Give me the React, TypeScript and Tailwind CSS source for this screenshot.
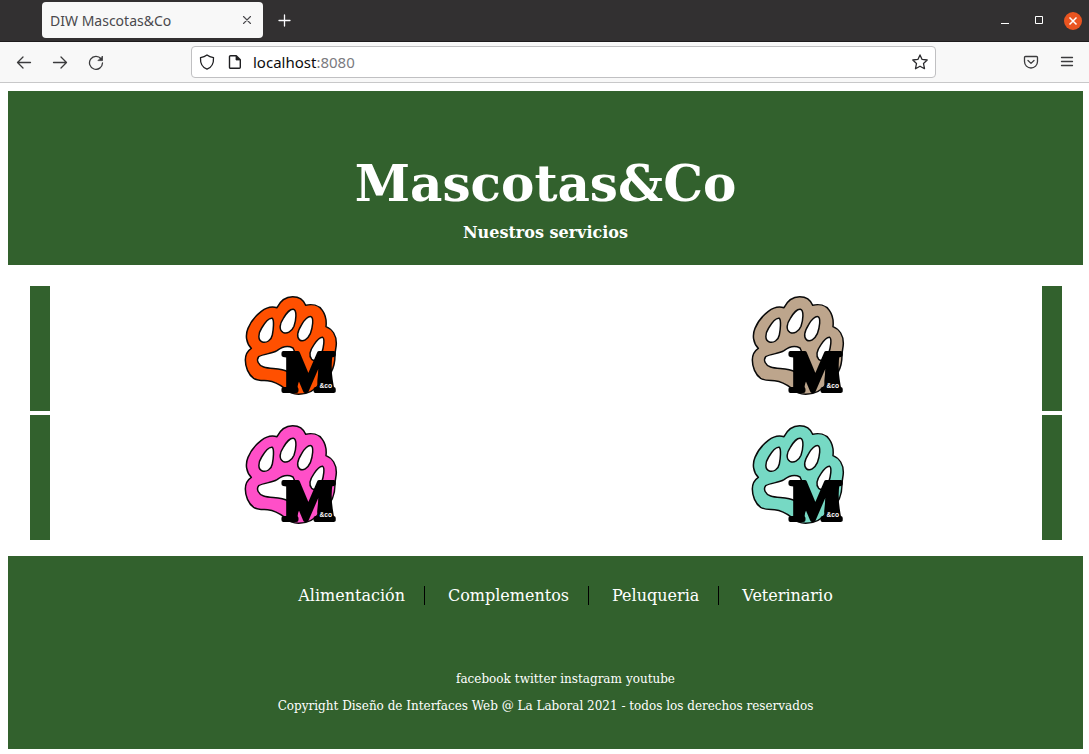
import type { ReactNode } from "react";

const services = [
  { name: "Alimentación", color: "#ff5000" },
  { name: "Complementos", color: "#bda58c" },
  { name: "Peluqueria", color: "#ff4fc8" },
  { name: "Veterinario", color: "#76d9c4" },
];

const networks = ["facebook", "twitter", "instagram", "youtube"];

function PawLogo({ color, label }: { color: string; label: string }) {
  return (
    <svg viewBox="6 0 330 360" className="h-[120px] w-[110px]" role="img" aria-label={label}>
      <g stroke="#0a0a0a" strokeWidth="4.5" strokeLinejoin="round">
        <path
          fill={color}
          d="M123 65C133 44 148 32 170 32C189 32 203 42 209 58C228 53 248 58 259 73C269 87 272 104 270 122C290 130 301 150 301 172C301 184 297 194 297 208C297 250 277 278 251 293C239 310 217 325 188 325C168 325 157 318 146 307C127 292 115 286 95 284C79 283 66 285 53 277C37 266 28 243 28 222C28 207 34 195 46 187C31 173 27 148 36 127C45 105 59 89 76 76C90 65 107 60 123 65Z"
        />
        <g fill="#fff">
          <path d="M109 97C115 102 112 132 109 147C106 163 91 172 79 168C65 163 66 143 77 126C86 111 100 95 109 97Z" />
          <path d="M172 70C184 73 180 103 174 121C167 138 152 145 141 139C128 131 131 113 142 97C150 83 163 69 172 70Z" />
          <path d="M225 92C234 95 230 125 223 143C215 161 201 168 191 162C180 152 187 132 197 116C205 101 217 90 225 92Z" />
          <path d="M260 154C267 158 263 184 257 202C250 221 238 228 227 220C216 207 224 190 234 176C242 164 252 153 260 154Z" />
          <path d="M68 212C83 203 107 204 123 194C136 184 153 177 171 186L194 237L218 290C190 290 173 270 157 258C133 245 104 250 83 243C67 238 60 222 68 212Z" />
        </g>
      </g>
      <path
        fill="#000"
        d="M152 204H184L190 284Q182 300 186 316H146Q158 300 156 280ZM252 204H290Q284 240 290 280Q292 300 298 318H248Q242 300 244 284Z"
      />
      <text
        x="219"
        y="315"
        textAnchor="middle"
        className="font-['Liberation_Serif',serif] text-[168px] font-bold"
        fill="#000"
        stroke="#000"
        strokeWidth="12"
        strokeLinejoin="round"
      >
        M
      </text>
      <text
        x="269"
        y="306"
        textAnchor="middle"
        className="font-['Liberation_Sans',sans-serif] text-[20px] font-bold"
        fill="#fff"
      >
        &amp;co
      </text>
    </svg>
  );
}

function ToolButton({ label, children }: { label: string; children: ReactNode }) {
  return (
    <button type="button" aria-label={label} className="flex size-8 items-center justify-center">
      <svg
        viewBox="0 0 16 16"
        className="size-4"
        fill="none"
        stroke="#3b3b3d"
        strokeWidth="1.3"
        strokeLinecap="round"
        strokeLinejoin="round"
      >
        {children}
      </svg>
    </button>
  );
}

function TabStrip() {
  return (
    <div className="flex h-[42px] items-center border-b border-[#1d1b1c] bg-[#323031] pr-[7px] pl-[42px]">
      <div className="mb-px flex h-9 w-[221px] items-center justify-between rounded-[4px] bg-[#f8f8f8] pr-2 pl-2">
        <span className="text-[14px] text-[#4a494d]">DIW Mascotas&amp;Co</span>
        <button type="button" aria-label="Cerrar pestaña" className="flex size-4 items-center justify-center">
          <svg viewBox="0 0 16 16" className="size-4" stroke="#4a494d" strokeWidth="1.1" strokeLinecap="round">
            <path d="M4.500 4.500l7 7M11.500 4.500l-7 7" />
          </svg>
        </button>
      </div>
      <button type="button" aria-label="Nueva pestaña" className="ml-[14px] flex size-4 items-center justify-center">
        <svg viewBox="0 0 16 16" className="size-4" stroke="#fbfbfe" strokeWidth="1.3" strokeLinecap="round">
          <path d="M7.500 2v11M2 7.500h11" />
        </svg>
      </button>
      <div className="ml-auto flex items-center">
        <button type="button" aria-label="Minimizar" className="mr-[18px]">
          <svg viewBox="0 0 16 16" className="size-4" stroke="#fff" strokeWidth="1">
            <path d="M4 10.5h8" />
          </svg>
        </button>
        <button type="button" aria-label="Maximizar" className="mr-[17px]">
          <svg viewBox="0 0 16 16" className="size-4" fill="none" stroke="#fff" strokeWidth="1">
            <path d="M4.500 3.500h7v7h-7z" />
          </svg>
        </button>
        <button type="button" aria-label="Cerrar">
          <svg viewBox="0 0 18 18" className="size-[18px]" stroke="#fff" strokeWidth="1.5">
            <circle cx="9" cy="9" r="9" fill="#e95420" stroke="none" />
            <path d="M5.500 5.500l7 7M12.500 5.500l-7 7" />
          </svg>
        </button>
      </div>
    </div>
  );
}

function Toolbar() {
  return (
    <div className="flex h-[41px] items-center border-b border-[#c8c8c9] bg-[#f8f8f8] pr-[6px] pl-2">
      <div className="flex gap-1">
        <ToolButton label="Atrás">
          <path d="M14.500 8.500h-13M7 3L1.500 8.500L7 14" />
        </ToolButton>
        <ToolButton label="Adelante">
          <path d="M1.500 8.500h13M9 3L14.500 8.500L9 14" />
        </ToolButton>
        <ToolButton label="Recargar">
          <path d="M13.100 4.800A6.500 6.500 0 1 0 14.500 9" />
          <path d="M14.500 2.400v4.200h-4.200z" fill="#3b3b3d" strokeWidth="0.8" />
        </ToolButton>
      </div>
      <div className="mx-[79px] flex h-8 flex-1 items-center rounded-[4px] border border-[#c0c0c2] bg-white px-[7px]">
        <svg viewBox="0 0 16 16" className="size-4" fill="none" stroke="#1f1f22" strokeWidth="1.3" strokeLinejoin="round">
          <path d="M8 1C9.800 2.400 12 3.200 14.500 3.600C14.800 9 12.500 13.500 8 15.200C3.500 13.500 1.200 9 1.500 3.600C4 3.200 6.200 2.400 8 1Z" />
        </svg>
        <svg viewBox="0 0 16 16" className="ml-3 size-4" fill="none" stroke="#1f1f22" strokeWidth="1.4" strokeLinejoin="round">
          <path d="M3.500 1.700h5.800L13.300 5.700v7.600a1 1 0 0 1-1 1H3.500a1 1 0 0 1-1-1V2.700a1 1 0 0 1 1-1Z" />
          <path d="M9 2v4h4z" fill="#1f1f22" strokeWidth="0.8" />
        </svg>
        <div className="ml-[10px] flex-1 text-[15px] text-[#7b7b7f]">
          <span className="text-[#0c0c0d]">localhost</span>:8080
        </div>
        <button type="button" aria-label="Añadir a marcadores">
          <svg viewBox="0 0 16 16" className="size-4" fill="none" stroke="#2b2b2e" strokeWidth="1.3" strokeLinejoin="round">
            <path d="M8 0.900L10.100 5.400L15.200 6L11.500 9.500L12.500 14.700L8 12.200L3.500 14.700L4.500 9.500L0.800 6L5.900 5.400Z" />
          </svg>
        </button>
      </div>
      <div className="flex gap-1">
        <ToolButton label="Guardar en Pocket">
          <path d="M2.500 2.500h11a1 1 0 0 1 1 1V7.500a6.500 6.500 0 0 1-13 0V3.500a1 1 0 0 1 1-1Z" />
          <path d="M5 6.500L8 9.400L11 6.500" />
        </ToolButton>
        <ToolButton label="Menú">
          <path d="M2.500 3.500h11M2.500 7.500h11M2.500 11.500h11" />
        </ToolButton>
      </div>
    </div>
  );
}

export default function App() {
  return (
    <div className="min-h-screen bg-white font-['Noto_Sans','Open_Sans',sans-serif]">
      <TabStrip />
      <Toolbar />
      <div className="mt-2 mr-[6px] ml-2 pb-[5px] font-['DejaVu_Serif',serif] text-white">
        <header className="bg-[#32612d] pt-[63px] pb-5 text-center font-bold">
          <h1 className="text-[50px] leading-[60px]">Mascotas&amp;Co</h1>
          <h2 className="mt-[7px] text-base">Nuestros servicios</h2>
        </header>
        <main className="mt-[21px] mr-[21px] ml-[22px] grid gap-1">
          {[services.slice(0, 2), services.slice(2)].map((row) => (
            <div
              key={row[0].name}
              className="grid h-[125px] grid-cols-2 gap-[22px] border-x-[20px] border-[#32612d]"
            >
              {row.map((service) => (
                <a key={service.name} href="#" className="flex justify-center">
                  <PawLogo color={service.color} label={service.name} />
                </a>
              ))}
            </div>
          ))}
        </main>
        <footer className="mt-4 bg-[#32612d] pt-[30px] pb-[35px] text-center text-xs">
          <nav className="pl-10">
            <ul className="flex justify-center gap-[23px] text-base leading-[19px]">
              {services.map((service) => (
                <li key={service.name} className="border-r border-black pr-[19px] last:border-r-0 last:pr-0">
                  <a href="#">{service.name}</a>
                </li>
              ))}
            </ul>
          </nav>
          <ul className="mt-[66px] flex justify-center gap-1 pl-10 leading-4">
            {networks.map((network) => (
              <li key={network}>
                <a href="#">{network}</a>
              </li>
            ))}
          </ul>
          <p className="mt-[11px] leading-4">
            Copyright Diseño de Interfaces Web @ La Laboral 2021 - todos los derechos reservados
          </p>
        </footer>
      </div>
    </div>
  );
}
